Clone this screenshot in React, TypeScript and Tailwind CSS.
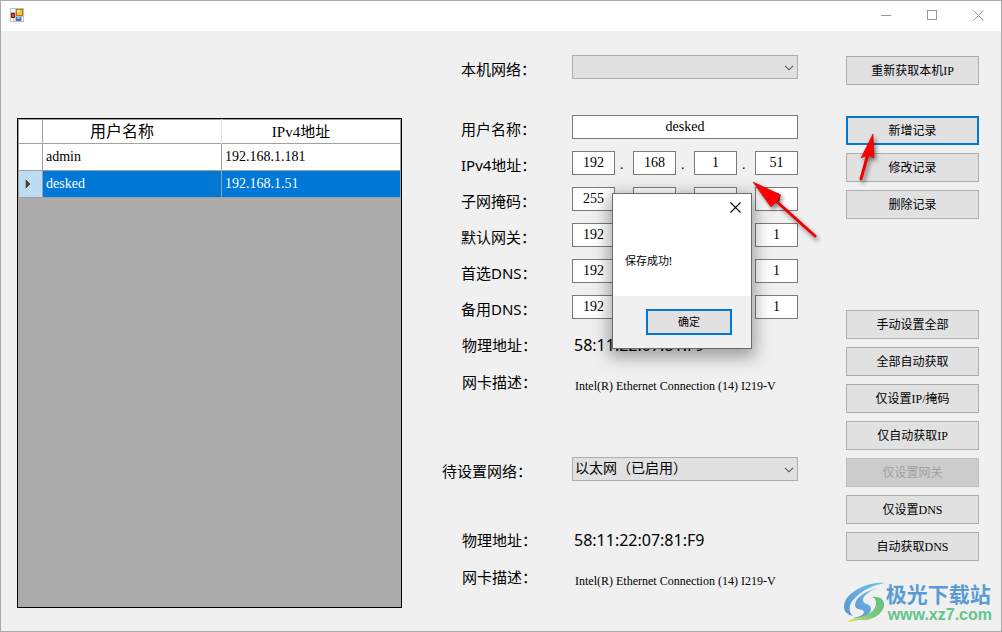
import { useState } from "react";

interface UserRecord {
  name: string;
  ip: string;
}

interface AddressField {
  id: string;
  label: string;
  octets: string[];
}

const records: UserRecord[] = [
  { name: "admin", ip: "192.168.1.181" },
  { name: "desked", ip: "192.168.1.51" },
];

const addressFields: AddressField[] = [
  { id: "ipv4", label: "IPv4地址：", octets: ["192", "168", "1", "51"] },
  { id: "mask", label: "子网掩码：", octets: ["255", "255", "255", "0"] },
  { id: "gateway", label: "默认网关：", octets: ["192", "168", "1", "1"] },
  { id: "dns1", label: "首选DNS：", octets: ["192", "168", "1", "1"] },
  { id: "dns2", label: "备用DNS：", octets: ["192", "168", "1", "1"] },
];

const recordActions = ["新增记录", "修改记录", "删除记录"];

const networkActions = [
  "手动设置全部",
  "全部自动获取",
  "仅设置IP/掩码",
  "仅自动获取IP",
  "仅设置网关",
  "仅设置DNS",
  "自动获取DNS",
];

const mac = "58:11:22:07:81:F9";
const adapter = "Intel(R) Ethernet Connection (14) I219-V";

const sans = "font-['Noto_Sans','Noto_Sans_CJK_SC',sans-serif]";
const serif = "font-['Liberation_Serif','Noto_Sans_CJK_SC',serif]";

function TitleBar() {
  return (
    <header className="flex h-[30px] items-center justify-between bg-white pb-0.5 pl-[9px]">
      <svg width="14" height="14" viewBox="0 0 14 14" shapeRendering="crispEdges" aria-hidden="true">
        <path d="M0 0h14v14H0z" fill="#c0c0c0" />
        <path d="M1 1h4v3H1zM1 10h2v3H1zM4 10h1v3H4zM12 9h1v4h-1z" fill="#fff" />
        <path d="M6 1h7v7H6z" fill="#b07d10" />
        <path d="M7 2h5v5H7z" fill="#f8c63a" />
        <path d="M7 2h3v2H7z" fill="#ffe48c" />
        <path d="M1 5h4v5H1z" fill="#8f1410" />
        <path d="M2 6h2v3H2z" fill="#dc4a38" />
        <path d="M6 9h5v4H6z" fill="#3f72d0" />
        <path d="M7 9h3v2H7z" fill="#86b2f5" />
      </svg>
      <div className="flex h-full text-[#999]">
        <button type="button" aria-label="最小化" className="grid w-[46px] place-items-center">
          <svg width="10" height="10" shapeRendering="crispEdges">
            <path d="M0 5.5h10" stroke="currentColor" />
          </svg>
        </button>
        <button type="button" aria-label="最大化" className="grid w-[46px] place-items-center">
          <svg width="10" height="10" shapeRendering="crispEdges">
            <path d="M.5 .5h9v9h-9z" fill="none" stroke="currentColor" />
          </svg>
        </button>
        <button type="button" aria-label="关闭" className="grid w-[46px] place-items-center">
          <svg width="11" height="11">
            <path d="M.5 .5l10 10M10.5 .5l-10 10" stroke="currentColor" />
          </svg>
        </button>
      </div>
    </header>
  );
}

function RecordGrid({ selected, onSelect }: { selected: string; onSelect: (name: string) => void }) {
  return (
    <div className={`flex-1 border border-black bg-[#ababab] ${serif}`}>
      <table className="w-full table-fixed border-collapse text-left text-sm">
        <colgroup>
          <col className="w-6" />
          <col />
          <col />
        </colgroup>
        <thead>
          <tr className="h-6 border border-[#a0a0a0] bg-white text-center">
            <td className="border-r border-[#a0a0a0]" />
            <th className="border-r border-[#e5e5e5] p-0 pr-5 text-base leading-5 font-normal">用户名称</th>
            <th className="p-0 pr-5 text-[15px] leading-5 font-normal">IPv4地址</th>
          </tr>
        </thead>
        <tbody>
          {records.map((record) => {
            const active = record.name === selected;
            return (
              <tr
                key={record.name}
                onClick={() => onSelect(record.name)}
                className={`h-[27px] ${active ? "bg-[#0078d7] text-white" : "bg-white text-black"}`}
              >
                <td className={`border border-[#a0a0a0] p-0 ${active ? "bg-[#bcdcf4]" : "bg-white"}`}>
                  {active && (
                    <svg width="8" height="12" className="ml-[5px]" aria-hidden="true">
                      <path d="M1.5 1v10l5-5z" fill="#404040" stroke="#fff" strokeWidth="1" paintOrder="stroke" />
                    </svg>
                  )}
                </td>
                <td className="border border-[#a0a0a0] p-0 pl-[3px] leading-5">{record.name}</td>
                <td className="border border-[#a0a0a0] p-0 pl-[3px] leading-5">{record.ip}</td>
              </tr>
            );
          })}
        </tbody>
      </table>
    </div>
  );
}

const labelClass = `w-[130px] shrink-0 text-[15px] leading-7 ${sans}`;
const inputClass = `h-6 min-w-0 border border-[#7a7a7a] bg-white text-center text-sm text-black outline-none ${serif}`;

function AddressRow({ field }: { field: AddressField }) {
  return (
    <div role="group" aria-labelledby={field.id} className="mt-3 flex h-6">
      <span id={field.id} className={`${labelClass} pl-[19px]`}>
        {field.label}
      </span>
      <div className="flex flex-1">
        {field.octets.map((octet, i) => (
          <div key={i} className="contents">
            {i > 0 && <span className={`w-[18px] pl-[5px] text-sm leading-7 ${serif}`}>.</span>}
            <input aria-label={`${field.label}${i + 1}`} defaultValue={octet} className={`${inputClass} w-0 flex-1`} />
          </div>
        ))}
      </div>
    </div>
  );
}

function NetworkSelect({ id, options }: { id: string; options: string[] }) {
  return (
    <div className="relative flex-1">
      <select
        id={id}
        className={`block h-6 w-full appearance-none border border-[#adadad] bg-[#e1e1e1] pl-0.5 text-sm text-black outline-none ${serif}`}
      >
        {options.map((option) => (
          <option key={option}>{option}</option>
        ))}
      </select>
      <svg width="10" height="6" className="pointer-events-none absolute top-[10px] right-1" aria-hidden="true">
        <path d="M1 .8l4 4 4-4" fill="none" stroke="#555" strokeWidth="1.1" />
      </svg>
    </div>
  );
}

function AdapterInfo() {
  return (
    <dl>
      <div className="flex h-6">
        <dt className={`${labelClass} pl-5`}>物理地址：</dt>
        <dd className={`pl-0.5 text-base leading-7 ${sans}`}>{mac}</dd>
      </div>
      <div className="mt-[13px] flex h-6">
        <dt className={`${labelClass} pl-5`}>网卡描述：</dt>
        <dd className={`pl-[3px] text-xs leading-9 whitespace-nowrap ${serif}`}>{adapter}</dd>
      </div>
    </dl>
  );
}

function MessageBox({ onClose }: { onClose: () => void }) {
  return (
    <div
      role="dialog"
      aria-label="保存成功!"
      className={`absolute top-[162px] left-[170px] flex h-[156px] w-[140px] flex-col border border-[#6b6b6b] bg-white text-[11px] shadow-[0_5px_16px_3px_rgba(0,0,0,0.35)] ${sans}`}
    >
      <button type="button" aria-label="关闭" onClick={onClose} className="mt-2 mr-2.5 self-end">
        <svg width="11" height="11">
          <path d="M.5 .5l10 10M10.5 .5l-10 10" stroke="#000" strokeWidth="1.1" />
        </svg>
      </button>
      <p className="mt-[38px] flex-1 pl-3 leading-5">保存成功!</p>
      <div className="flex h-[52px] items-center justify-end bg-[#f0f0f0] pr-[19px]">
        <button
          type="button"
          onClick={onClose}
          className="h-[26px] w-[86px] border-2 border-[#0078d7] bg-[#e1e1e1]"
        >
          确定
        </button>
      </div>
    </div>
  );
}

function ActionButton({ label, focused, disabled }: { label: string; focused?: boolean; disabled?: boolean }) {
  return (
    <button
      type="button"
      disabled={disabled}
      className={`h-[29px] w-full text-xs ${serif} ${
        disabled
          ? "border border-[#bfbfbf] bg-[#ccc] text-[#a0a0a0]"
          : focused
            ? "border-2 border-[#0078d7] bg-[#e1e1e1]"
            : "border border-[#adadad] bg-[#e1e1e1]"
      }`}
    >
      {label}
    </button>
  );
}

interface ArrowProps {
  className: string;
  width: number;
  height: number;
  shaft: string;
  head: string;
}

function Arrow({ className, width, height, shaft, head }: ArrowProps) {
  return (
    <svg
      width={width}
      height={height}
      className={`pointer-events-none absolute overflow-visible drop-shadow-[2px_3px_2px_rgba(0,0,0,0.5)] ${className}`}
      aria-hidden="true"
    >
      <path d={shaft} stroke="#f00000" strokeWidth="3" strokeLinecap="round" />
      <path d={head} fill="#f00" stroke="#c00" strokeWidth="0.6" />
    </svg>
  );
}

function Watermark() {
  return (
    <div className="absolute right-[9px] bottom-1.5 flex items-center gap-px">
      <svg width="42" height="42" viewBox="0 0 42 42" aria-hidden="true">
        <defs>
          <linearGradient id="swirlBlue" x1="0" y1="1" x2="1" y2="0">
            <stop offset="0" stopColor="#5f92d0" />
            <stop offset="1" stopColor="#6cc4ee" />
          </linearGradient>
          <linearGradient id="swirlGreen" x1="0" y1="1" x2="1" y2="0">
            <stop offset="0" stopColor="#e6e468" />
            <stop offset="0.45" stopColor="#7fc97a" />
            <stop offset="1" stopColor="#59bf86" />
          </linearGradient>
        </defs>
        <path d="M42 1C26-1 1 10 1 25c0 5 4 8 9 9C5 29 5 22 13 15 20 8 30 3 42 1z" fill="url(#swirlBlue)" />
        <path
          d="M35 6C22 9 12 16 12 23c0 6 8 3 9 7 0 3-5 5-11 6 9 1 18-3 18-9 0-6-8-4-8-9 0-4 6-9 15-12z"
          fill="url(#swirlBlue)"
        />
        <path d="M29 15c8-1 13 3 12 9-2 10-14 15-24 14-3 0-5 2-13 2 3-2 5-3 8-4 12-1 21-7 21-15 0-3-1-5-4-6z" fill="url(#swirlGreen)" />
      </svg>
      <div className="whitespace-nowrap">
        <div className="font-['Noto_Sans_CJK_SC',sans-serif] text-[21px] leading-6 font-bold text-[#5b9bd5]">
          极光下载站
        </div>
        <div className="pl-0.5 font-['Liberation_Sans',sans-serif] text-base leading-5 font-bold text-[#63c58c]">
          www.xz7.com
        </div>
      </div>
    </div>
  );
}

export default function App() {
  const [selected, setSelected] = useState("desked");
  const [messageOpen, setMessageOpen] = useState(true);

  return (
    <div
      lang="zh-CN"
      className="relative flex min-h-screen flex-col border border-[#a9a9a9] bg-[#f0f0f0] text-black"
    >
      <TitleBar />

      <main className="flex flex-1 pr-[22px] pl-4">
        <section className="flex flex-1 flex-col pt-[87px] pb-[23px]">
          <RecordGrid selected={selected} onSelect={setSelected} />
        </section>

        <section className="relative ml-10 w-[356px] pt-6">
          <div className="flex h-6">
            <label htmlFor="local" className={`${labelClass} pl-[19px]`}>
              本机网络：
            </label>
            <NetworkSelect id="local" options={[""]} />
          </div>
          <div className="mt-9 flex h-6">
            <label htmlFor="username" className={`${labelClass} pl-[19px]`}>
              用户名称：
            </label>
            <input id="username" defaultValue="desked" className={`${inputClass} flex-1`} />
          </div>
          {addressFields.map((field) => (
            <AddressRow key={field.id} field={field} />
          ))}
          <div className="mt-3">
            <AdapterInfo />
          </div>

          <div className="mt-[65px] flex h-6">
            <label htmlFor="target" className={labelClass}>
              待设置网络：
            </label>
            <NetworkSelect id="target" options={["以太网（已启用）"]} />
          </div>
          <div className="mt-[45px]">
            <AdapterInfo />
          </div>

          {messageOpen && <MessageBox onClose={() => setMessageOpen(false)} />}
          <Arrow
            className="top-[151px] left-[311px]"
            width={64}
            height={56}
            shaft="M22 18L62 54"
            head="M0 0L28 13L24 19L18 25Z"
          />
        </section>

        <aside className="relative ml-12 w-[133px] pt-[25px]">
          <ActionButton label="重新获取本机IP" />
          <div className="mt-[31px] flex flex-col gap-2">
            {recordActions.map((label, i) => (
              <ActionButton key={label} label={label} focused={i === 0} />
            ))}
          </div>
          <div className="mt-[91px] flex flex-col gap-2">
            {networkActions.map((label) => (
              <ActionButton key={label} label={label} disabled={label === "仅设置网关"} />
            ))}
          </div>
          <Arrow
            className="top-[103px] left-[13px]"
            width={18}
            height={48}
            shaft="M2 45L9 20"
            head="M14 0L15 24L9 21L2 24Z"
          />
        </aside>
      </main>

      <Watermark />
    </div>
  );
}
